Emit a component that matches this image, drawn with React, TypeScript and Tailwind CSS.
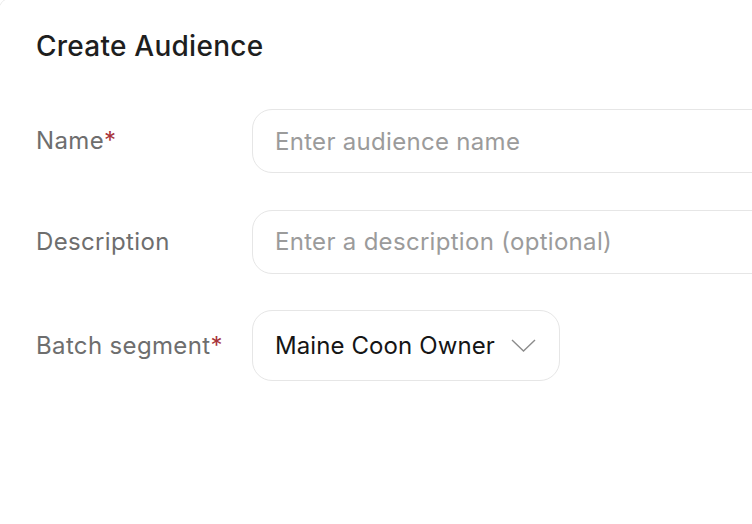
import { useState } from "react";

const font = { fontFamily: "Inter, 'Noto Sans', sans-serif" };

const Label = ({ text, required }: { text: string; required?: boolean }) => (
  <div className="flex items-center text-[24px] tracking-[0.35px] text-[#6e6e6e]">
    {text}
    {required && <span className="text-[#a8333a]">*</span>}
  </div>
);

export default function App() {
  const [name, setName] = useState("");
  const [desc, setDesc] = useState("");

  return (
    <div className="w-[752px] h-[524px] overflow-hidden bg-white" style={font}>
      <div className="-ml-[2px] -mt-[3px] w-[900px] h-[560px] rounded-[14px] border border-[#ececec] bg-white pl-[37px] pt-[31px]">
        <h1 className="text-[28px] leading-[34px] font-medium tracking-[0.25px] text-[#1e1e1e]">
          Create Audience
        </h1>

        <div className="mt-[46px] grid grid-cols-[216px_1fr] gap-y-[36.5px] items-center">
          <Label text="Name" required />
          <input
            value={name}
            onChange={(e) => setName(e.target.value)}
            placeholder="Enter audience name"
            className="h-[64px] w-full rounded-[20px] border border-[#e6e6e6] px-[22px] text-[24px] tracking-[0.3px] text-[#1e1e1e] placeholder:text-[#9b9b9b] outline-none"
          />

          <Label text="Description" />
          <input
            value={desc}
            onChange={(e) => setDesc(e.target.value)}
            placeholder="Enter a description (optional)"
            className="h-[64px] w-full rounded-[20px] border border-[#e6e6e6] px-[22px] text-[24px] tracking-[0.3px] text-[#1e1e1e] placeholder:text-[#9b9b9b] outline-none"
          />

          <Label text="Batch segment" required />
          <div>
            <button className="flex h-[71px] w-[308px] items-center justify-between rounded-[20px] border border-[#e6e6e6] bg-white pl-[22px] pr-[23px] text-[24px] tracking-[0.1px] text-[#151515]">
              Maine Coon Owner
              <svg width="25" height="13" viewBox="0 0 25 13" fill="none">
                <polyline points="1,1 12.5,12 24,1" stroke="#8c8c8c" strokeWidth="1.4" />
              </svg>
            </button>
          </div>
        </div>
      </div>
    </div>
  );
}
